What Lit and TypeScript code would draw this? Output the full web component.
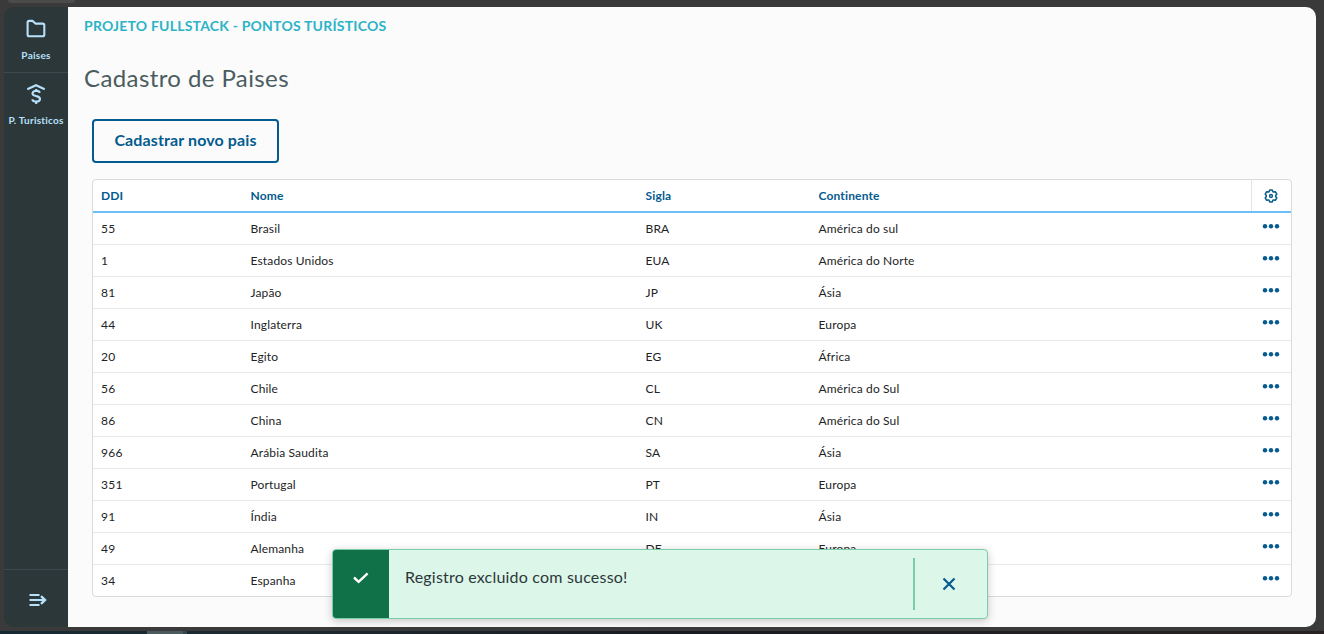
import { LitElement, html, css } from "lit";
import { customElement } from "lit/decorators.js";

interface Country {
  ddi: string;
  nome: string;
  sigla: string;
  continente: string;
}

const COUNTRIES: Country[] = [
  { ddi: "55", nome: "Brasil", sigla: "BRA", continente: "América do sul" },
  { ddi: "1", nome: "Estados Unidos", sigla: "EUA", continente: "América do Norte" },
  { ddi: "81", nome: "Japão", sigla: "JP", continente: "Ásia" },
  { ddi: "44", nome: "Inglaterra", sigla: "UK", continente: "Europa" },
  { ddi: "20", nome: "Egito", sigla: "EG", continente: "África" },
  { ddi: "56", nome: "Chile", sigla: "CL", continente: "América do Sul" },
  { ddi: "86", nome: "China", sigla: "CN", continente: "América do Sul" },
  { ddi: "966", nome: "Arábia Saudita", sigla: "SA", continente: "Ásia" },
  { ddi: "351", nome: "Portugal", sigla: "PT", continente: "Europa" },
  { ddi: "91", nome: "Índia", sigla: "IN", continente: "Ásia" },
  { ddi: "49", nome: "Alemanha", sigla: "DE", continente: "Europa" },
  { ddi: "34", nome: "Espanha", sigla: "ES", continente: "Europa" },
];

@customElement("side-menu")
export class SideMenu extends LitElement {
  static styles = css`
    :host { display: flex; flex-direction: column; width: 64px; background: #2c3739; color: #b7e1fb; }
    .item { box-sizing: border-box; height: 66px; border-bottom: 1px solid #3c4a4d; display: flex; flex-direction: column; align-items: center; padding-top: 9px; }
    .item.second { border: 0; padding-top: 8px; }
    svg { display: block; fill: none; stroke: currentColor; flex: none; }
    .label { font-weight: 700; font-size: 10px; line-height: 14px; margin-top: 6px; white-space: nowrap; letter-spacing: 0.25px; }
    .label.wide { letter-spacing: 0.23px; }
    .spacer { flex: 1; }
    .toggle { height: 58px; border-top: 1px solid #3c4a4d; display: flex; align-items: center; justify-content: center; padding: 2px 0 0 4px; box-sizing: border-box; }
  `;
  render() {
    return html`
      <div class="item">
        <svg width="24" height="26" viewBox="0 0 24 26" stroke-width="2.1" stroke-linejoin="round">
          <path d="M3.6 6.4Q3.6 4.9 5.1 4.9H8.7L11.4 7.6H18.8Q20.3 7.6 20.3 9.1V18.7Q20.3 20.2 18.8 20.2H5.1Q3.6 20.2 3.6 18.7Z"></path>
        </svg>
        <span class="label">Paises</span>
      </div>
      <div class="item second">
        <svg width="24" height="26" viewBox="0 0 24 26" stroke-width="2.1">
          <path d="M3.3 8.3L12 4.2L20.7 8.3"></path>
          <path d="M16 11.7C15.4 10.4 14 9.9 12.3 9.9C9.9 9.9 8.5 10.9 8.5 12.4C8.5 14 10 14.6 12.2 15.1C14.7 15.6 16 16.3 16 17.9C16 19.7 14.3 20.5 12.2 20.5C10.2 20.5 8.7 19.8 8.1 18.3M12.2 7.9V10M12.2 20.5V23"></path>
        </svg>
        <span class="label wide">P. Turisticos</span>
      </div>
      <div class="spacer"></div>
      <div class="toggle">
        <svg width="18" height="14" viewBox="0 0 18 14" stroke-width="2">
          <path d="M0.5 2H10.5M0.5 7H16M0.5 12H10.5"></path>
          <path d="M12 3.2L16 7L12 10.8" stroke-width="2.4"></path>
        </svg>
      </div>
    `;
  }
}

@customElement("country-table")
export class CountryTable extends LitElement {
  static styles = css`
    :host { display: block; box-sizing: border-box; border: 1px solid #d8dadb; border-radius: 4px; background: #fff; overflow: hidden; font-size: 12px; color: #1d2426; }
    .row { display: grid; grid-template-columns: 149.5px 395px 173px 1fr 40px; height: 32px; box-sizing: border-box; border-bottom: 1px solid #e8eaea; }
    .row:last-child { border-bottom: 0; height: 31px; }
    .cell { padding-left: 8px; line-height: 31px; letter-spacing: 0.15px; white-space: nowrap; }
    .cell.num { letter-spacing: 0.35px; }
    .head { height: 33px; border-bottom: 2px solid #6bc1f7; color: #045b8f; font-weight: 700; }
    .gear { border-left: 1px solid #e4e6e6; display: flex; align-items: center; justify-content: center; padding-top: 1px; }
    .more { display: flex; justify-content: center; padding-top: 11px; }
    svg { display: block; }
  `;
  render() {
    return html`
      <div class="row head">
        <div class="cell">DDI</div><div class="cell">Nome</div><div class="cell">Sigla</div><div class="cell">Continente</div>
        <div class="gear">
          <svg width="15" height="14" viewBox="0 0 15 14" fill="none" stroke="#045b8f" stroke-width="1.5" stroke-linejoin="round">
            <path d="M5.7 1.1H8.3L8.9 2.7L9.8 3.1L11.5 2.8L12.8 5.1L11.7 6.4V7.6L12.8 8.9L11.5 11.2L9.8 10.9L8.9 11.3L8.3 12.9H5.7L5.1 11.3L4.2 10.9L2.5 11.2L1.2 8.9L2.3 7.6V6.4L1.2 5.1L2.5 2.8L4.2 3.1L5.1 2.7Z"></path>
            <circle cx="7" cy="7" r="1.4"></circle>
          </svg>
        </div>
      </div>
      ${COUNTRIES.map((c) => html`
        <div class="row">
          <div class="cell num">${c.ddi}</div><div class="cell">${c.nome}</div><div class="cell">${c.sigla}</div><div class="cell">${c.continente}</div>
          <div class="more">
            <svg width="18" height="5" viewBox="0 0 18 5" fill="#045b8f">
              <circle cx="3" cy="2.2" r="2.2"></circle><circle cx="9" cy="2.2" r="2.2"></circle><circle cx="15" cy="2.2" r="2.2"></circle>
            </svg>
          </div>
        </div>`)}
    `;
  }
}

@customElement("toast-message")
export class ToastMessage extends LitElement {
  static styles = css`
    :host { display: flex; box-sizing: border-box; width: 656px; height: 70px; border: 1px solid #7bceaa; border-radius: 4px; background: #dcf6e9; overflow: hidden; box-shadow: 0 2px 8px rgba(0, 0, 0, 0.22); }
    .status { width: 56px; background: #107048; display: flex; justify-content: center; padding-top: 22px; box-sizing: border-box; }
    .text { flex: 1; padding: 15px 0 0 16px; font-size: 16px; line-height: 24px; letter-spacing: 0.2px; color: #2c3739; }
    .close { margin: 8px 0; width: 74px; box-sizing: border-box; border-left: 2px solid #7bceaa; display: flex; align-items: center; justify-content: center; padding-right: 4px; }
    svg { display: block; fill: none; }
  `;
  render() {
    return html`
      <div class="status">
        <svg width="16" height="12" viewBox="0 0 16 12" stroke="#fff" stroke-width="2.4"><path d="M1 5.5L5.6 9.8L14.6 1.3"></path></svg>
      </div>
      <div class="text">Registro excluido com sucesso!</div>
      <div class="close">
        <svg width="14" height="14" viewBox="0 0 14 14" stroke="#045b8f" stroke-width="2.2"><path d="M1.5 1.5L12.5 12.5M12.5 1.5L1.5 12.5"></path></svg>
      </div>
    `;
  }
}

@customElement("app-root")
export class AppRoot extends LitElement {
  static styles = css`
    :host { display: flex; flex-direction: column; position: relative; width: 1324px; height: 634px; overflow: hidden; background: #3a3a3a; font-family: Lato, "Open Sans", sans-serif; }
    .strip { height: 7px; padding-left: 8px; box-sizing: border-box; }
    .tab { width: 67px; height: 3px; background: #4b4b4b; border-radius: 0 0 3px 3px; }
    .window { height: 620px; margin: 0 8px 0 4px; border-radius: 10px; overflow: hidden; display: flex; background: linear-gradient(90deg, #2c3739 64px, #fbfbfb 64px); }
    .main { flex: 1; display: flex; flex-direction: column; }
    .brand { padding: 9px 16px 0; font-size: 14px; line-height: 20px; font-weight: 700; color: #2cb3c7; letter-spacing: 0.21px; }
    h1 { margin: 0; padding: 26px 16px 0; font-size: 24px; line-height: 32px; font-weight: 400; color: #4a5c60; letter-spacing: 0.4px; }
    .content { padding: 19px 24px 0; }
    button { display: block; width: 187px; height: 44px; padding: 0 0 3px; border: 2px solid #045b8f; border-radius: 4px; background: transparent; color: #045b8f; font: 700 16px Lato, sans-serif; letter-spacing: 0.12px; margin: 6px 0 16px; }
    .taskbar { margin-top: 4px; height: 3px; background: linear-gradient(90deg, #172a34 0, #1e2a30 20%, #181b22 50%, #292222 100%); padding-left: 147px; }
    .active { width: 36px; height: 3px; background: #4c5b5e; border-right: 4px solid #35484b; }
    toast-message { position: absolute; left: 332px; top: 549px; }
  `;
  render() {
    return html`
      <div class="strip"><div class="tab"></div></div>
      <div class="window">
        <side-menu></side-menu>
        <div class="main">
          <div class="brand"><span>PROJETO FULLSTACK - PONTOS TURÍSTICOS</span></div>
          <h1>Cadastro de Paises</h1>
          <div class="content">
            <button>Cadastrar novo pais</button>
            <country-table></country-table>
          </div>
        </div>
      </div>
      <div class="taskbar"><div class="active"></div></div>
      <toast-message></toast-message>
    `;
  }
}
